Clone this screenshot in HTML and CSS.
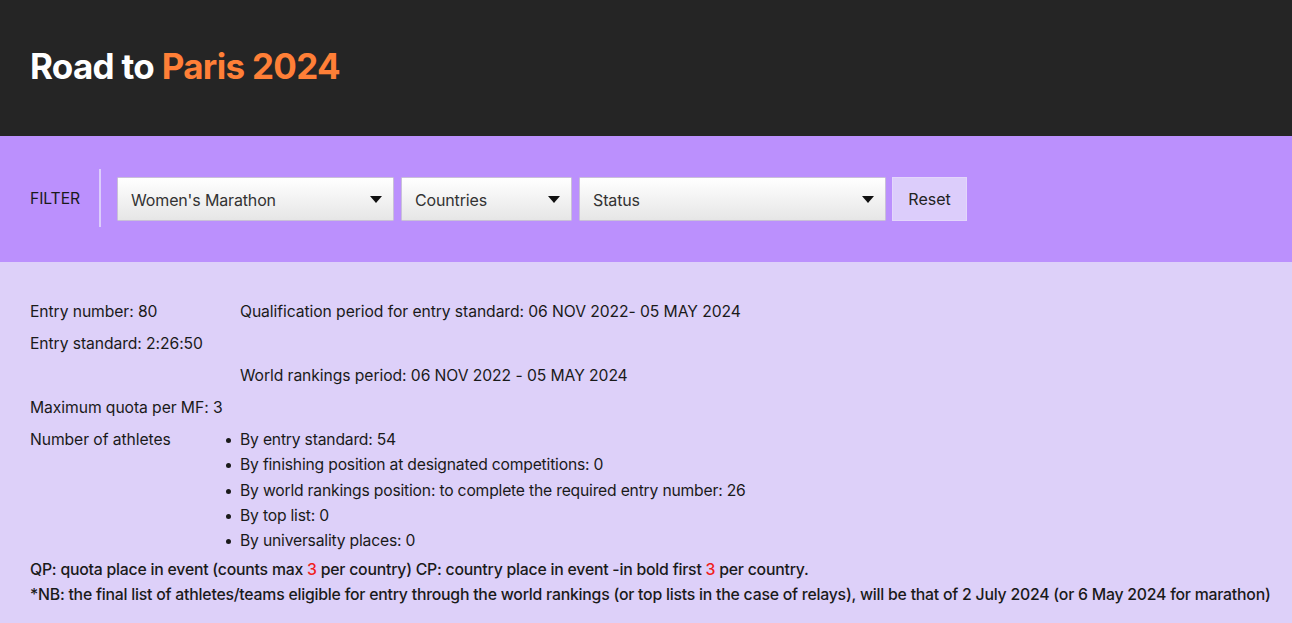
FILE: index.html
```html
<!DOCTYPE html>
<html lang="en">
<head>
<meta charset="utf-8">
<title>Road to Paris 2024</title>
<link rel="stylesheet" href="styles.css">
</head>
<body>
<header class="hero">
  <h1 class="title">Road to <span class="accent">Paris 2024</span></h1>
</header>
<section class="filter-bar">
  <span class="filter-label">FILTER</span>
  <span class="divider"></span>
  <div class="select select-event"><span>Women's Marathon</span><svg class="caret" width="12" height="7" viewBox="0 0 12 7"><path d="M0 0H12L6 7Z" fill="#111"/></svg></div>
  <div class="select select-country"><span>Countries</span><svg class="caret" width="12" height="7" viewBox="0 0 12 7"><path d="M0 0H12L6 7Z" fill="#111"/></svg></div>
  <div class="select select-status"><span>Status</span><svg class="caret" width="12" height="7" viewBox="0 0 12 7"><path d="M0 0H12L6 7Z" fill="#111"/></svg></div>
  <button class="reset">Reset</button>
</section>
<main class="info">
  <div class="grid">
    <div class="cell">Entry number: 80</div>
    <div class="cell">Qualification period for entry standard: 06 NOV 2022- 05 MAY 2024</div>
    <div class="cell">Entry standard: 2:26:50</div>
    <div class="cell"></div>
    <div class="cell"></div>
    <div class="cell">World rankings period: 06 NOV 2022 - 05 MAY 2024</div>
    <div class="cell">Maximum quota per MF: 3</div>
    <div class="cell"></div>
    <div class="cell">Number of athletes</div>
    <ul class="cell list">
      <li>By entry standard: 54</li>
      <li>By finishing position at designated competitions: 0</li>
      <li>By world rankings position: to complete the required entry number: 26</li>
      <li>By top list: 0</li>
      <li>By universality places: 0</li>
    </ul>
  </div>
  <p class="note first">QP: quota place in event (counts max <span class="red">3</span> per country) CP: country place in event -in bold first <span class="red">3</span> per country.</p>
  <p class="note">*NB: the final list of athletes/teams eligible for entry through the world rankings (or top lists in the case of relays), will be that of 2 July 2024 (or 6 May 2024 for marathon)</p>
</main>
</body>
</html>
```
FILE: styles.css
```css
* { box-sizing: border-box; }
html, body { margin: 0; padding: 0; }
body {
  font-family: Inter, "Noto Sans", sans-serif;
  color: #1a1a1a;
  background: #ddd0f9;
  font-size: 15.7px;
  letter-spacing: -0.08px;
}
.hero {
  background: #252525;
  height: 136px;
  padding: 0 30px;
  display: flex;
  align-items: center;
}
.title {
  margin: 0;
  color: #fff;
  font-size: 35px;
  font-weight: 700;
  letter-spacing: -0.7px;
  margin-top: -5px;
}
.accent { color: #ff7f37; }
.filter-bar {
  background: #bb90fd;
  height: 126px;
  padding: 0 30px;
  display: flex;
  align-items: center;
}
.filter-label {
  color: #1a1a1a;
  margin-right: 19px;
  padding-bottom: 1px;
}
.divider {
  width: 2px;
  height: 58px;
  background: #dccdfb;
  margin-right: 16px;
  margin-top: -3px;
}
.select {
  height: 44px;
  display: flex;
  align-items: center;
  justify-content: space-between;
  padding: 0 11px 0 13px;
  border: 1px solid #c9c0d8;
  background: linear-gradient(#ffffff, #e6e6e6);
  color: #333;
  margin-right: 7px;
  border-radius: 1px;
  font-size: 16px;
  letter-spacing: -0.15px;
}
.select span { padding-top: 1px; }
.select-event { width: 277px; }
.select-country { width: 171px; }
.select-status { width: 307px; margin-right: 6px; }
.reset {
  height: 44px;
  width: 75px;
  background: #dccdfb;
  border: 1px solid #e3d6fb;
  font: inherit;
  font-size: 16px;
  color: #222;
  padding: 0;
}
.info {
  padding: 38px 10px 10px 30px;
}
.grid {
  display: grid;
  grid-template-columns: 210px 1fr;
  grid-auto-rows: minmax(32px, auto);
}
.cell {
  line-height: 23px;
}
.list {
  margin: 0;
  padding: 0;
  list-style: none;
  letter-spacing: -0.2px;
}
.list li {
  position: relative;
  line-height: 25.3px;
}
.list li:first-child { margin-top: -1px; }
.list li::before {
  content: "";
  position: absolute;
  left: -14px;
  top: 11px;
  width: 5px;
  height: 5px;
  border-radius: 50%;
  background: #1a1a1a;
}
.note {
  margin: 0;
  font-weight: 500;
  line-height: 25px;
  font-size: 15.8px;
  letter-spacing: -0.22px;
  white-space: nowrap;
}
.note.first { margin-top: 4px; }
.red { color: #f0201c; }
```
